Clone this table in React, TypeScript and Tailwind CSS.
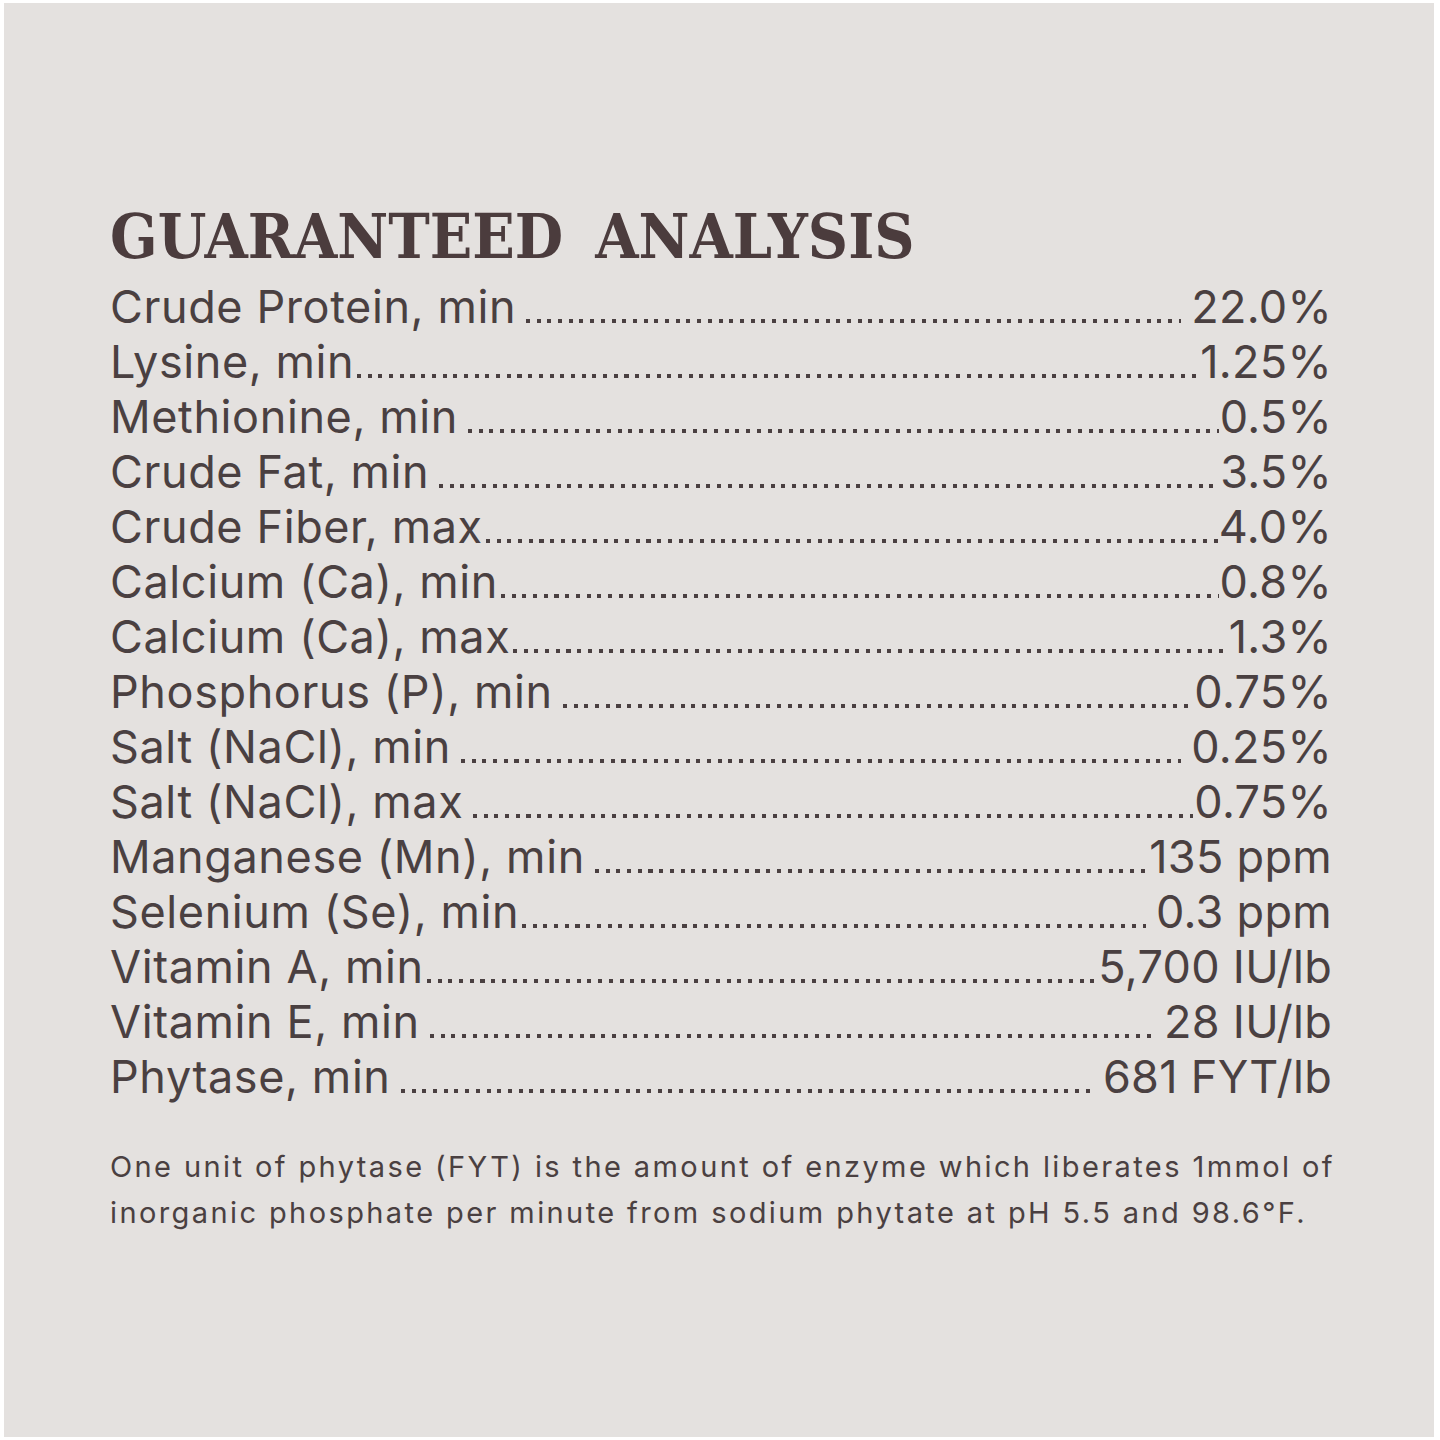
import React from "react";

const rows: [string, string, boolean, boolean][] = [
  ["Crude Protein, min", "22.0%", true, true],
  ["Lysine, min", "1.25%", false, false],
  ["Methionine, min", "0.5%", true, false],
  ["Crude Fat, min", "3.5%", true, false],
  ["Crude Fiber, max", "4.0%", false, false],
  ["Calcium (Ca), min", "0.8%", false, false],
  ["Calcium (Ca), max", "1.3%", false, false],
  ["Phosphorus (P), min", "0.75%", true, false],
  ["Salt (NaCl), min", "0.25%", true, true],
  ["Salt (NaCl), max", "0.75%", true, false],
  ["Manganese (Mn), min", "135 ppm", true, false],
  ["Selenium (Se), min", "0.3 ppm", false, true],
  ["Vitamin A, min", "5,700 IU/lb", false, false],
  ["Vitamin E, min", "28 IU/lb", true, true],
  ["Phytase, min", "681 FYT/lb", true, true],
];

export default function App() {
  return (
    <div className="w-[1440px] h-[1440px] bg-white pl-[4px] pt-[3px] pr-[6px] pb-[3px]">
      <div className="w-full h-full bg-[#e4e1df] pl-[106px] pr-[102px] pt-[196px]">
        <h1 className="flex text-[#4b3c3d] text-[62px] leading-[76px] font-bold [font-stretch:condensed] [font-family:'DejaVu_Serif_Condensed','DejaVu_Serif',serif]">
          <span>GUARANTEED</span>
          <span className="ml-[32px]">ANALYSIS</span>
        </h1>
        <div className="mt-[4px] text-[#4a4041] [font-family:Inter,sans-serif]">
          {rows.map(([label, value, gl, gr]) => (
            <div key={label} className="flex items-baseline h-[55px] text-[45px] leading-[55px]">
              <span className="whitespace-nowrap tracking-[0.6px]">{label}</span>
              <div
                className={`flex-1 h-[4px] bg-[repeating-linear-gradient(to_right,#4a4041_0px,#4a4041_4px,transparent_4px,transparent_10.7px)] ${gl ? "ml-[10px]" : "ml-[3px]"} ${gr ? "mr-[10px]" : "mr-[1px]"}`}
              />
              <span className="whitespace-nowrap tracking-[0.3px]">{value}</span>
            </div>
          ))}
        </div>
        <p className="mt-[40px] text-[#4a4041] text-[29px] leading-[46px] tracking-[2.4px] whitespace-nowrap [font-family:Inter,sans-serif]">
          One unit of phytase (FYT) is the amount of enzyme which liberates 1mmol of
          <br />
          inorganic phosphate per minute from sodium phytate at pH 5.5 and 98.6°F.
        </p>
      </div>
    </div>
  );
}
